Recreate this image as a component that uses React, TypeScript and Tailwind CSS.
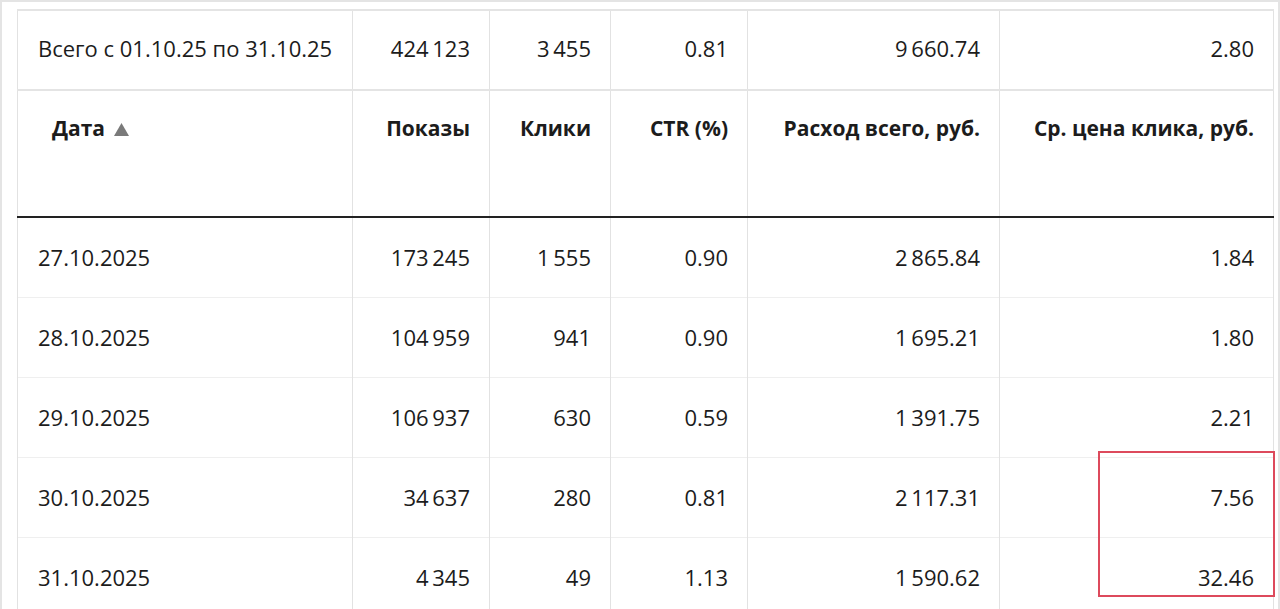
import React from 'react';

type Row = { date: string; shows: string; clicks: string; ctr: string; cost: string; cpc: string };

const rows: Row[] = [
  { date: '27.10.2025', shows: '173\u2009245', clicks: '1\u2009555', ctr: '0.90', cost: '2\u2009865.84', cpc: '1.84' },
  { date: '28.10.2025', shows: '104\u2009959', clicks: '941', ctr: '0.90', cost: '1\u2009695.21', cpc: '1.80' },
  { date: '29.10.2025', shows: '106\u2009937', clicks: '630', ctr: '0.59', cost: '1\u2009391.75', cpc: '2.21' },
  { date: '30.10.2025', shows: '34\u2009637', clicks: '280', ctr: '0.81', cost: '2\u2009117.31', cpc: '7.56' },
  { date: '31.10.2025', shows: '4\u2009345', clicks: '49', ctr: '1.13', cost: '1\u2009590.62', cpc: '32.46' },
];

const base = 'border-l border-r border-[#e2e2e2] align-middle';
const num = `${base} px-[19px] text-right`;
const first = `${base} pl-[20px] text-left whitespace-nowrap`;
const head = 'border-l border-r border-[#e2e2e2] px-[19px] pt-[22px] align-top text-right whitespace-nowrap';

export default function App() {
  return (
    <div
      className="relative w-[1280px] h-[609px] overflow-hidden bg-white border-t-2 border-l-2 border-r-2 border-[#e4e4e4] pt-[7px] pl-[15px] text-[22px] text-[#1c1c1c]"
      style={{ fontFamily: '"Open Sans", "Noto Sans", sans-serif' }}
    >
      <table className="table-fixed border-collapse w-[1256px]">
        <colgroup>
          <col className="w-[335px]" />
          <col className="w-[137px]" />
          <col className="w-[121px]" />
          <col className="w-[137px]" />
          <col className="w-[252px]" />
          <col className="w-[274px]" />
        </colgroup>
        <tbody>
          {/* Summary */}
          <tr className="h-[80px] border-t-2 border-b-2 border-[#e4e4e4]">
            <td className={`${first} pb-[3px]`}>Всего с 01.10.25 по 31.10.25</td>
            <td className={`${num} pb-[3px]`}>424{'\u2009'}123</td>
            <td className={`${num} pb-[3px]`}>3{'\u2009'}455</td>
            <td className={`${num} pb-[3px]`}>0.81</td>
            <td className={`${num} pb-[3px]`}>9{'\u2009'}660.74</td>
            <td className={`${num} pb-[3px]`}>2.80</td>
          </tr>
          {/* Header */}
          <tr className="h-[127px] border-b-2 border-[#222] font-bold text-[21px]">
            <td className="border-l border-r border-[#e2e2e2] pl-[34px] pt-[22px] align-top text-left">
              <span className="inline-flex items-center gap-[9px]">
                Дата
                <svg width="15" height="13" viewBox="0 0 15 13" className="mt-[1px]">
                  <polygon points="7.5,0 15,13 0,13" fill="#7a7a7a" />
                </svg>
              </span>
            </td>
            <td className={head}>Показы</td>
            <td className={head}>Клики</td>
            <td className={head}>CTR (%)</td>
            <td className={head}>Расход всего, руб.</td>
            <td className={head}>Ср. цена клика, руб.</td>
          </tr>
          {rows.map((r) => (
            <tr key={r.date} className="h-[80px] border-b border-[#efefef]">
              <td className={first}>{r.date}</td>
              <td className={num}>{r.shows}</td>
              <td className={num}>{r.clicks}</td>
              <td className={num}>{r.ctr}</td>
              <td className={num}>{r.cost}</td>
              <td className={num}>{r.cpc}</td>
            </tr>
          ))}
        </tbody>
      </table>

      {/* highlight annotation */}
      <div className="absolute left-[1096px] top-[449px] w-[177px] h-[146px] border-2 border-[#dd4a5c]" />
    </div>
  );
}
